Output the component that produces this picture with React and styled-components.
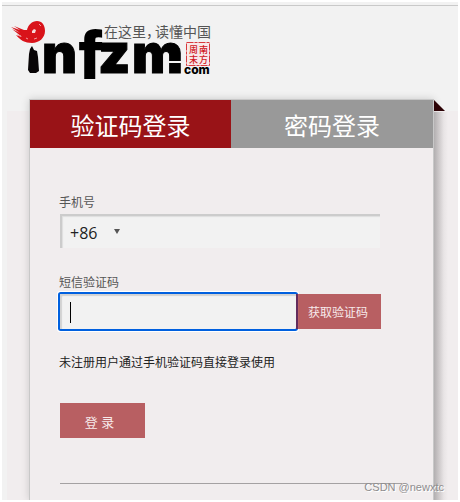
import React, { useState } from "react";
import styled, { createGlobalStyle } from "styled-components";

const GlobalStyle = createGlobalStyle`
  *, *::before, *::after { box-sizing: border-box; }
  body {
    margin: 0;
    background: #fff;
    color: #222;
    font: 12px/16px "Open Sans", "Noto Sans CJK SC", sans-serif;
  }
  button, input, select { font: inherit; color: inherit; margin: 0; border-radius: 0; }
`;

const Page = styled.div`
  display: flex;
  flex-direction: column;
  position: relative;
  min-height: calc(100vh - 4px);
  margin: 2px;
  background: #f2f2f2;
  overflow: hidden;
`;

const Header = styled.header`
  height: 109px;
  padding: 12px 0 0 6px;

  &::before {
    content: "";
    display: block;
    height: 1px;
    margin: -9px 0 8px -6px;
    background: #c9c9c9;
  }
`;

const LogoLink = styled.a`
  display: block;
  width: 208px;
  height: 70px;

  svg { display: block; overflow: visible; }
`;

const Backdrop = styled.main`
  display: flex;
  flex: 1;
  margin-left: 5px;
  padding: 0 24px 0 22px;
  background: #f1edee;
`;

const Card = styled.section`
  position: relative;
  flex: 1;
  min-width: 0;
  margin-top: -12px;
  border: 1px solid #c8c8c8;
  border-bottom: 0;
  background: #f1edee;
  box-shadow: 0 0 8px rgba(0, 0, 0, 0.16);

  &::before {
    content: "";
    position: absolute;
    top: 12px;
    bottom: 0;
    left: 100%;
    width: 14px;
    margin-left: 1px;
    background: linear-gradient(to right, #b2afb0, #cdc9ca 35%, #e8e4e5 70%, #f1edee);
  }
`;

const Fold = styled.svg`
  position: absolute;
  top: 0;
  left: 100%;
`;

const Tabs = styled.div`
  display: grid;
  grid-template-columns: 201fr 202fr;
`;

const Tab = styled.button`
  height: 48px;
  border: 0;
  padding: 4px 0 0;
  background: ${(p) => (p.$active ? "#991317" : "#999")};
  color: #fff;
  font-size: 24px;
  line-height: 32px;
  text-align: center;
  cursor: pointer;
`;

const Form = styled.form`
  padding: 46px 31px 0 29px;
`;

const Fields = styled.div`
  margin-right: 22px;
`;

const Field = styled.div`
  margin-bottom: 26px;
`;

const Label = styled.label`
  display: block;
  height: 20px;
  padding-top: 1px;
  color: #555;
  line-height: 16px;
`;

const PhoneBox = styled.div`
  display: flex;
  position: relative;
  height: 34px;
  margin-left: 1px;
  border-top: 2px solid #ccc;
  border-left: 2px solid #ccc;
  background: #f2f2f2;
  box-shadow: inset 1px 1px 1px #dedede;
`;

const CountryCode = styled.select`
  appearance: none;
  width: 64px;
  border: 0;
  padding: 2px 0 0 8px;
  background: transparent;
  color: #222;
  font-size: 16px;
  line-height: 24px;
  outline: 0;
`;

const Arrow = styled.svg`
  position: absolute;
  top: 13px;
  left: 52px;
  pointer-events: none;
`;

const PhoneInput = styled.input`
  flex: 1;
  min-width: 0;
  border: 0;
  padding: 0 8px;
  background: transparent;
  font-size: 16px;
  outline: 0;
`;

const CodeRow = styled.div`
  display: flex;
  height: 35px;
  margin-left: 1px;
  margin-right: -1px;
`;

const CodeBox = styled.div`
  position: relative;
  flex: 1;
  min-width: 0;
`;

const CodeInput = styled.input`
  display: block;
  width: 100%;
  height: 100%;
  border: 0;
  border-radius: 1px;
  padding: 0 10px;
  background: #f2f2f2;
  box-shadow: inset 2px 2px 1px #d2d2d2, 0 0 0 2px #0060df, 0 0 0 3px #fff;
  caret-color: transparent;
  font-size: 16px;
  outline: 0;
`;

const Caret = styled.span`
  position: absolute;
  top: 8px;
  left: 10px;
  width: 1px;
  height: 21px;
  background: #000;
  pointer-events: none;
`;

const ActionButton = styled.button`
  position: relative;
  width: 85px;
  height: 35px;
  padding: ${(p) => (p.$submit ? "2px 6px 0 0" : "2px 1px 0 0")};
  margin-left: ${(p) => (p.$submit ? "1px" : "0")};
  border: 0;
  background: rgba(153, 19, 23, 0.65);
  color: #f7eaeb;
  white-space: pre;
  font-size: ${(p) => (p.$submit ? "13px" : "12px")};
  cursor: pointer;
`;

const Note = styled.p`
  margin: 0 0 32px;
  line-height: 16px;
`;

const Divider = styled.hr`
  height: 1px;
  margin: 45px 0 0 1px;
  border: 0;
  background: #a4a1a2;
`;

const Watermark = styled.div`
  position: absolute;
  right: 14px;
  bottom: 5px;
  color: #8f8d8e;
  font: 11px/16px "Liberation Sans", sans-serif;
  text-shadow: 1px 1px 0 #fff;
`;

function Logo() {
  return (
    <svg width="208" height="70" viewBox="8 14 208 70" role="img" aria-label="infzm.com">
      <path
        fill="#d9131a"
        d="M27 30 C28 25 32 21 37 21 C42 21 45 25 45 31 C45 38 39 43 32 43 C25 43 20 40 16 35 L22 37 L12 29 L20 33 L11 27 L20 30 L14 26 L24 30 Z"
      />
      <path d="M32 31 l2-2 2 1-1 3-3 0z" fill="#f5d9d9" />
      <path d="M39 24l2 2M26 38l2 1M34 39l3-1M17 35l4 1" stroke="#f09a9d" fill="none" />
      <path d="M32 46 L34 50 L37 51 L38 57 L39 71 L36 73 L30 73 L28 70 L29 54 L30 49 Z" fill="#080506" />
      <g fontFamily="Inter, sans-serif" fontWeight="900" fill="#000" stroke="#000">
        <text x="42" y="73" fontSize="54" strokeWidth="1">n</text>
        <text x="79" y="78" fontSize="66" fontFamily="'Liberation Sans', sans-serif" fontWeight="700" strokeWidth="2">f</text>
        <text x="98" y="73" fontSize="55" strokeWidth="1">z</text>
        <text x="132" y="73" fontSize="54" strokeWidth="1">m</text>
        <text x="184" y="74" fontSize="12" fontWeight="800" stroke="none">com</text>
      </g>
      <rect x="169" y="61" width="14" height="2" fill="#f2f2f2" />
      <g fontFamily="'Noto Sans CJK SC', sans-serif" fontSize="14" fill="#555">
        <text x="104" y="37">在这里，</text>
        <text x="155" y="37">读懂中国</text>
      </g>
      <rect x="186.500" y="42.500" width="23" height="23" fill="#f8e9e9" stroke="#d83a3e" strokeDasharray="7 1 3 1" />
      <g fontFamily="'Noto Sans CJK SC', sans-serif" fontSize="9" fontWeight="500" fill="#d0181e">
        <text x="189" y="53">周</text>
        <text x="199" y="53">南</text>
        <text x="189" y="63">末</text>
        <text x="199" y="63">方</text>
      </g>
    </svg>
  );
}

export default function App() {
  const [mode, setMode] = useState("code");
  return (
    <>
      <GlobalStyle />
      <Page>
        <Header>
          <LogoLink href="#"><Logo /></LogoLink>
        </Header>
        <Backdrop>
          <Card>
            <Fold width="12" height="12" aria-hidden="true">
              <path d="M1 0 L12 11 L1 11 Z" fill="#2c0205" />
            </Fold>
            <Tabs role="tablist">
              <Tab type="button" role="tab" $active={mode === "code"} aria-selected={mode === "code"} onClick={() => setMode("code")}>
                验证码登录
              </Tab>
              <Tab type="button" role="tab" $active={mode === "password"} aria-selected={mode === "password"} onClick={() => setMode("password")}>
                密码登录
              </Tab>
            </Tabs>
            <Form onSubmit={(e) => e.preventDefault()}>
              <Fields>
                <Field>
                  <Label htmlFor="phone">手机号</Label>
                  <PhoneBox>
                    <CountryCode aria-label="+86" defaultValue="+86">
                      <option>+86</option>
                    </CountryCode>
                    <Arrow width="6" height="5" aria-hidden="true">
                      <path d="M0 0h6L3 5z" fill="#555" />
                    </Arrow>
                    <PhoneInput id="phone" type="tel" />
                  </PhoneBox>
                </Field>
                <Field>
                  <Label htmlFor="code">短信验证码</Label>
                  <CodeRow>
                    <CodeBox>
                      <CodeInput id="code" type="text" inputMode="numeric" />
                      <Caret />
                    </CodeBox>
                    <ActionButton type="button">获取验证码</ActionButton>
                  </CodeRow>
                </Field>
                <Note>未注册用户通过手机验证码直接登录使用</Note>
                <ActionButton $submit type="submit">登 录</ActionButton>
              </Fields>
              <Divider />
            </Form>
          </Card>
        </Backdrop>
        <Watermark>CSDN @newxtc</Watermark>
      </Page>
    </>
  );
}
